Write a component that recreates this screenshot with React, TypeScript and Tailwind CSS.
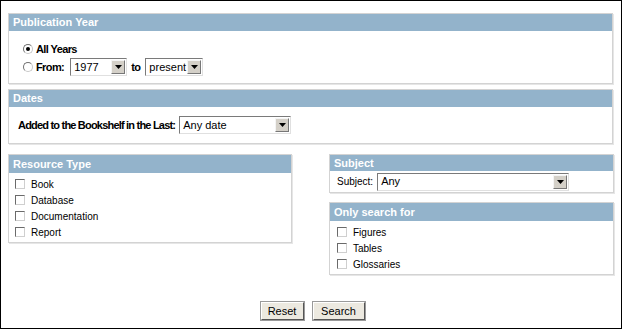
import type { ReactNode } from "react";

function Panel({
  title,
  className = "",
  headerClass = "h-[17px]",
  children,
}: {
  title: string;
  className?: string;
  headerClass?: string;
  children: ReactNode;
}) {
  return (
    <section
      className={`border border-[#d3d3d3] bg-white shadow-[1px_1px_0_#e6e6e6] ${className}`}
    >
      <div
        className={`flex items-center bg-[#93b3cb] px-[4px] text-[11px] font-bold text-white ${headerClass}`}
      >
        {title}
      </div>
      {children}
    </section>
  );
}

function Radio({ checked }: { checked?: boolean }) {
  return (
    <span className="relative inline-block h-[10px] w-[10px] rounded-full border border-t-[#707070] border-l-[#707070] border-r-[#c8c8c8] border-b-[#c8c8c8] bg-white">
      {checked ? (
        <span className="absolute left-[2px] top-[2px] h-[4px] w-[4px] rounded-full bg-black" />
      ) : null}
    </span>
  );
}

function Checkbox() {
  return (
    <span className="inline-block h-[10px] w-[10px] border border-t-[#6a6a6a] border-l-[#6a6a6a] border-r-[#cfcfcf] border-b-[#cfcfcf] bg-white" />
  );
}

function Select({ value, className }: { value: string; className: string }) {
  return (
    <span
      className={`flex h-[18px] items-stretch border border-t-[#7a7a7a] border-l-[#7a7a7a] border-r-[#e0e0e0] border-b-[#e0e0e0] bg-white font-normal tracking-normal ${className}`}
    >
      <span className="flex flex-1 items-center pl-[3px] text-[11px] text-black">
        {value}
      </span>
      <span className="m-[1px] flex w-[14px] items-center justify-center border border-t-[#f4f4f4] border-l-[#f4f4f4] border-r-[#777] border-b-[#777] bg-[#d4d0c8]">
        <svg width="7" height="4" viewBox="0 0 7 4">
          <path d="M0 0h7L3.5 4z" fill="#000" />
        </svg>
      </span>
    </span>
  );
}

function CheckRow({ label }: { label: string }) {
  return (
    <div className="flex h-[16px] items-center gap-[6px] text-[10px] text-black">
      <Checkbox />
      <span>{label}</span>
    </div>
  );
}

export default function App() {
  return (
    <div
      className="flex h-[329px] w-[622px] flex-col border border-black bg-white px-[7px] pt-[12px]"
      style={{ fontFamily: '"Liberation Sans", Arial, sans-serif' }}
    >
      <Panel title="Publication Year" className="h-[71px] w-[605px]">
        <div className="flex flex-col pl-[14px] pt-[9px] text-[11px] font-bold tracking-[-0.6px] text-black">
          <label className="flex h-[18px] items-center gap-[3px]">
            <Radio checked />
            <span>All Years</span>
          </label>
          <div className="flex h-[18px] items-center">
            <Radio />
            <span className="ml-[3px]">From:</span>
            <Select value="1977" className="ml-[6px] w-[57px]" />
            <span className="ml-[4px]">to</span>
            <Select value="present" className="ml-[5px] w-[58px]" />
          </div>
        </div>
      </Panel>

      <Panel title="Dates" className="mt-[5px] h-[55px] w-[605px]">
        <div className="flex h-[36px] items-center pl-[9px] text-[11px] font-bold tracking-[-0.8px] text-black">
          <span>Added to the Bookshelf in the Last:</span>
          <Select value="Any date" className="ml-[4px] w-[112px]" />
        </div>
      </Panel>

      <div className="mt-[10px] flex items-start justify-between">
        <Panel title="Resource Type" className="w-[284px]" headerClass="h-[18px]">
          <div className="flex flex-col pb-[2px] pl-[6px] pt-[3px]">
            <CheckRow label="Book" />
            <CheckRow label="Database" />
            <CheckRow label="Documentation" />
            <CheckRow label="Report" />
          </div>
        </Panel>

        <div className="flex w-[285px] flex-col">
          <Panel title="Subject" headerClass="h-[16px]">
            <div className="flex h-[21px] items-center pl-[7px] text-[10px] text-black">
              <span>Subject:</span>
              <Select value="Any" className="ml-[4px] w-[192px]" />
            </div>
          </Panel>
          <Panel title="Only search for" className="mt-[9px]" headerClass="h-[18px]">
            <div className="flex flex-col pb-[2px] pl-[7px] pt-[3px]">
              <CheckRow label="Figures" />
              <CheckRow label="Tables" />
              <CheckRow label="Glossaries" />
            </div>
          </Panel>
        </div>
      </div>

      <div className="mt-auto mb-[8px] flex justify-center gap-[9px] pl-[3px]">
        <button
          type="button"
          className="h-[18px] w-[43px] border border-t-[#fff] border-l-[#fff] border-r-[#555] border-b-[#555] bg-[#ece9e0] text-[11px] text-black shadow-[0_0_0_1px_#9a9a9a]"
        >
          Reset
        </button>
        <button
          type="button"
          className="h-[18px] w-[52px] border border-t-[#fff] border-l-[#fff] border-r-[#555] border-b-[#555] bg-[#ece9e0] text-[11px] text-black shadow-[0_0_0_1px_#9a9a9a]"
        >
          Search
        </button>
      </div>
    </div>
  );
}
